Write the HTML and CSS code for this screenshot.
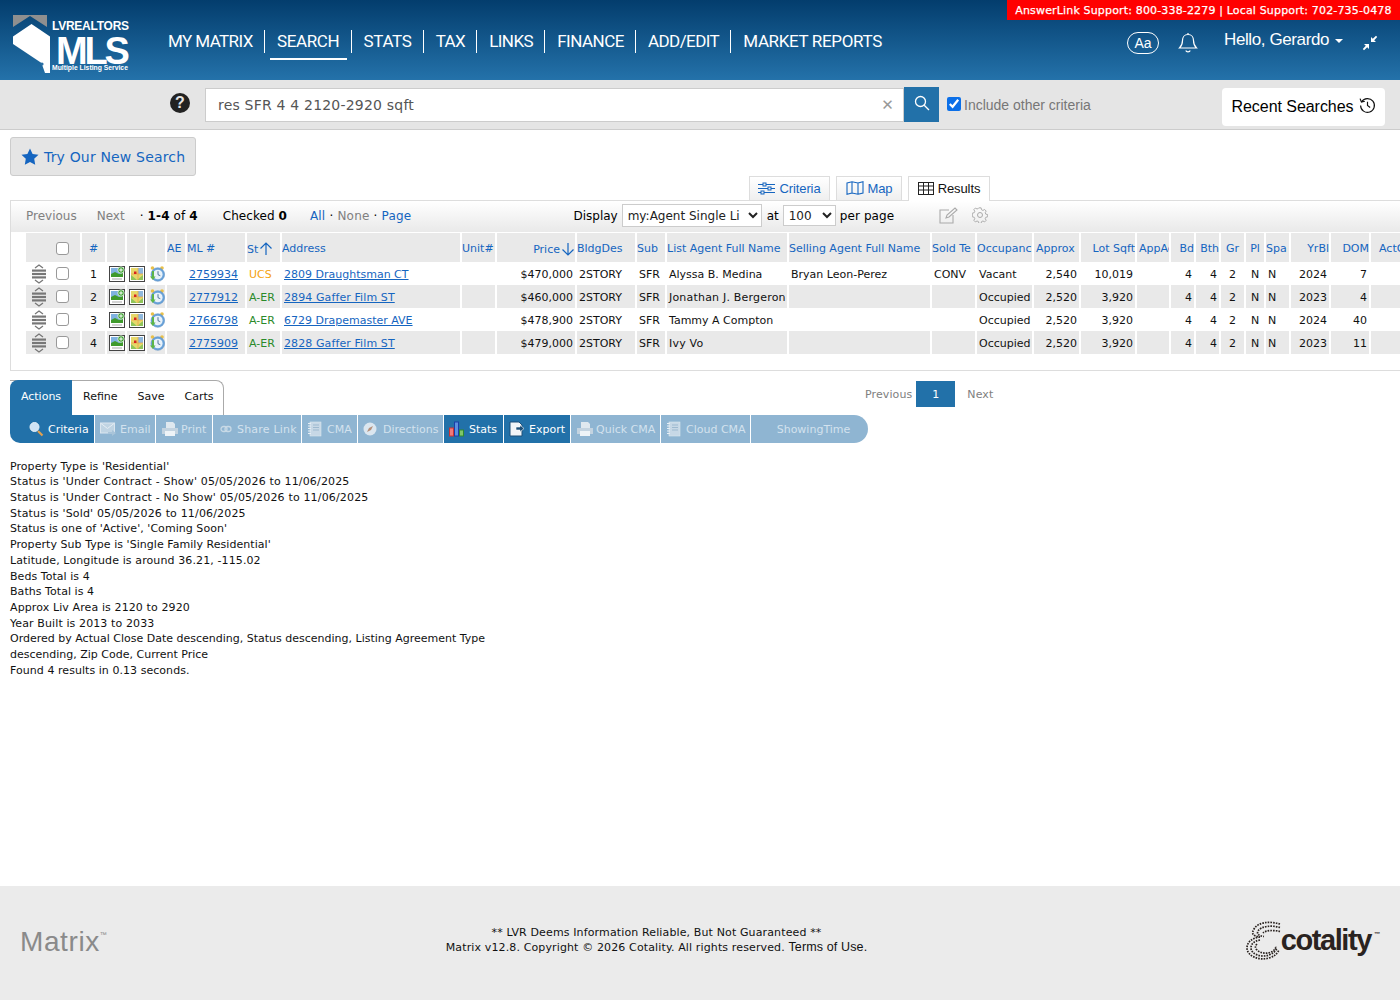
FILE: index.html
```html
<!DOCTYPE html>
<html lang="en">
<head>
<meta charset="utf-8">
<title>Matrix - Search Results</title>
<link rel="stylesheet" href="styles.css">
</head>
<body>
<svg class="defs" width="0" height="0" aria-hidden="true">
  <symbol id="i-photo" viewBox="0 0 16 16">
    <rect x=".5" y=".5" width="15" height="15" fill="#fff" stroke="#444"/>
    <rect x="2" y="2" width="12" height="9" fill="#7fb2e0"/>
    <path d="M2 8l4-2 4 2 4-1v4H2z" fill="#3f9a2c"/>
    <rect x="3" y="12.5" width="10" height="1" fill="#aaa"/>
    <circle cx="12" cy="4" r="3.2" fill="#3aa02e" stroke="#fff" stroke-width=".7"/>
    <path d="M12 2.2v3.6M10.2 4h3.6" stroke="#fff" stroke-width="1"/>
  </symbol>
  <symbol id="i-map" viewBox="0 0 16 16">
    <rect x=".5" y=".5" width="15" height="15" fill="#fff" stroke="#444"/>
    <rect x="2" y="2" width="12" height="12" fill="#e6d86a"/>
    <path d="M9 2h5v6H9z" fill="#8fb8dc"/>
    <path d="M2 9l6 5H2zM8 14l6-5v5z" fill="#8fc45a"/>
    <path d="M9 2v12M2 8h12" stroke="#e9a54c" stroke-width=".8"/>
    <rect x="5" y="5.5" width="2.5" height="2.5" fill="#d8231f"/>
  </symbol>
  <symbol id="i-clock" viewBox="0 0 16 16">
    <circle cx="3.500" cy="2" r="1.800" fill="#e8c04a"/>
    <circle cx="13" cy="2" r="1.800" fill="#e8c04a"/>
    <circle cx="8.800" cy="8.500" r="6.800" fill="#6aa3da" stroke="#4f86bd" stroke-width=".5"/>
    <circle cx="8.800" cy="8.500" r="4.800" fill="#e9f2f9"/>
    <path d="M9 5.200v3.500l2.300 1" fill="none" stroke="#3d6590" stroke-width=".9"/>
    <path d="M3 5v5.500H1L3.800 14l2.800-3.500H5V5z" fill="#5cb548"/>
  </symbol>
  <symbol id="i-grip" viewBox="0 0 16 20">
    <path d="M4 4l4-3 4 3M4 16l4 3 4-3" fill="none" stroke="#777" stroke-width="1.300"/>
    <rect x="1" y="5.500" width="14" height="2.200" fill="#777"/>
    <rect x="1" y="8.900" width="14" height="2.200" fill="#777"/>
    <rect x="1" y="12.300" width="14" height="2.200" fill="#777"/>
  </symbol>
  <symbol id="i-print" viewBox="0 0 18 16">
    <path d="M5 1h7l2 2v4H5z" fill="#dfe8ef"/>
    <path d="M1 7h16v6H1z" fill="#c3d3e0"/>
    <path d="M4 10h10v5H4z" fill="#eef3f7"/>
  </symbol>
  <symbol id="i-note" viewBox="0 0 16 16">
    <rect x="3" y="1" width="11" height="14" fill="#c7d8e6" stroke="#dbe6ef" stroke-width=".6"/>
    <path d="M1 2.500h3M1 5h3M1 7.500h3M1 10h3M1 12.500h3" stroke="#e6eef5"/>
    <path d="M6 4h6M6 6.500h6M6 9h6" stroke="#9db9cf"/>
  </symbol>
</svg>

<header class="topbar">
  <a class="logo" href="#">
    <svg width="120" height="60" viewBox="0 0 120 60">
      <path d="M1 1h34v12l-17-11L1 13z" fill="#8f8f8f"/>
      <path d="M1 22.500L19.500 10 38 22.500V59h-5l-3.500-10L1 30z" fill="#fff"/>
      <circle cx="30" cy="50" r="1.600" fill="#2a6fa5"/>
      <text class="logo-top" x="40" y="16">LVREALTORS</text>
      <text class="logo-mls" x="44" y="49.500">MLS</text>
      <text class="logo-sub" x="40" y="56">Multiple Listing Service</text>
    </svg>
  </a>
  <nav class="nav">
    <a class="nav-item nav-first" href="#">MY MATRIX</a>
    <a class="nav-item is-active" href="#">SEARCH</a>
    <a class="nav-item" href="#">STATS</a>
    <a class="nav-item nav-tight" href="#">TAX</a>
    <a class="nav-item nav-tight" href="#">LINKS</a>
    <a class="nav-item nav-mid" href="#">FINANCE</a>
    <a class="nav-item nav-tight" href="#">ADD/EDIT</a>
    <a class="nav-item last" href="#">MARKET REPORTS</a>
  </nav>
  <div class="top-right">
    <span class="aa">Aa</span>
    <svg class="bell" width="20" height="22" viewBox="0 0 20 22" fill="none" stroke="#fff" stroke-width="1.200"><path d="M10 2.500c-3.500 0-5.500 2.800-5.500 6 0 4-1 5.500-3 7.500h17c-2-2-3-3.500-3-7.500 0-3.200-2-6-5.500-6zM10 1v1.500M7.800 18.500c.5 1.700 3.900 1.700 4.400 0"/></svg>
    <span class="hello">Hello, Gerardo</span>
    <span class="caret"></span>
    <svg class="compress" width="16" height="16" viewBox="0 0 16 16" fill="#fff"><path d="M9 7V2l1.800 1.800L14 .8 15.200 2 12.200 5.200 14 7zM7 9v5l-1.800-1.800L2 15.200.8 14l3-3.200L2 9z"/></svg>
  </div>
  <div class="support">AnswerLink Support: 800-338-2279 | Local Support: 702-735-0478</div>
</header>

<section class="searchbar">
  <span class="help">?</span>
  <div class="search-input">
    <span>res SFR 4 4 2120-2920 sqft</span>
    <span class="clear">✕</span>
  </div>
  <button class="search-btn" type="button" aria-label="Search">
    <svg width="16" height="16" viewBox="0 0 16 16" fill="none" stroke="#fff" stroke-width="1.300"><circle cx="6.500" cy="6.500" r="5"/><path d="M10.200 10.200L15 15"/></svg>
  </button>
  <label class="include"><input class="include-check" type="checkbox" checked>Include other criteria</label>
  <button class="recent" type="button">Recent Searches
    <svg class="recent-icon" width="17" height="17" viewBox="0 0 16 16" fill="none" stroke="#111" stroke-width="1.100"><path d="M2.500 4.500A6.500 6.500 0 1 1 1.500 8M1 1.500l1.300 3.300 3.200-.8M8 4.500V8l2.500 1.800"/></svg>
  </button>
</section>

<main class="main">
  <button class="try" type="button">
    <svg width="18" height="17" viewBox="0 0 18 17" fill="#1565c0"><path d="M9 .5l2.600 5.400 5.900.8-4.300 4.100 1 5.900L9 13.900l-5.200 2.800 1-5.900L.5 6.700l5.900-.8z"/></svg>
    Try Our New Search
  </button>

  <div class="view-tabs">
    <a class="view-tab tab-criteria" href="#">
      <svg width="17" height="13" viewBox="0 0 17 13" fill="none" stroke="#1565c0"><path d="M0 2.500h17M0 6.500h17M0 10.500h17"/><rect x="5" y="1" width="3" height="3" fill="#f0f0f0"/><rect x="10" y="5" width="3" height="3" fill="#f0f0f0"/><rect x="3" y="9" width="3" height="3" fill="#f0f0f0"/></svg>
      Criteria</a>
    <a class="view-tab tab-map" href="#">
      <svg width="18" height="14" viewBox="0 0 18 14" fill="none" stroke="#1565c0" stroke-width="1.100"><path d="M1 2l5-1.200 6 1.200 5-1.200V12l-5 1.200L6 12l-5 1.200zM6 1v11M12 2v11"/></svg>
      Map</a>
    <a class="view-tab tab-results is-current" href="#">
      <svg width="16" height="13" viewBox="0 0 16 13" fill="none" stroke="#222"><rect x=".5" y=".5" width="15" height="12"/><path d="M.5 4h15M.5 8h15M5.500.5v12M10.500.5v12"/></svg>
      Results</a>
  </div>

  <section class="panel">
    <div class="tools">
      <span class="muted">Previous</span>
      <span class="muted t-next">Next</span>
      <span class="t-range">· <b>1-4</b> of <b>4</b></span>
      <span class="t-checked">Checked <b>0</b></span>
      <span class="t-all"><a href="#">All</a> · <span class="muted">None</span> · <a href="#">Page</a></span>
      <span class="t-display">Display</span>
      <select class="sel sel-display"><option>my:Agent Single Li</option></select>
      <span class="t-at">at</span>
      <select class="sel sel-page"><option>100</option></select>
      <span class="t-per">per page</span>
      <svg class="t-edit" width="19" height="17" viewBox="0 0 19 17" fill="none" stroke="#aaa" stroke-width="1.100"><path d="M14 8v8H1V3h9M7 11l1-3 8-7 2 2-8 7z"/></svg>
      <svg class="t-gear" width="16" height="16" viewBox="0 0 16 16" fill="none" stroke="#aaa"><path d="M6.800.8h2.400l.4 2 1.500.7 1.800-1 1.600 1.700-1 1.700.6 1.500 2 .5v2.300l-2 .5-.6 1.500 1 1.700-1.600 1.700-1.800-1-1.500.7-.4 1.900H6.800l-.4-1.900-1.500-.7-1.800 1-1.600-1.700 1-1.700-.6-1.500-2-.5V6.400l2-.5.6-1.500-1-1.700L3.100 1l1.800 1 1.500-.7z" transform="translate(.4 .1) scale(.95)"/><circle cx="8" cy="8" r="2.500"/></svg>
    </div>
    <table class="grid">
      <colgroup>
        <col class="w54"><col class="w23"><col class="w18"><col class="w18"><col class="w18"><col class="w18"><col class="w58"><col class="w33"><col class="w178"><col class="w33"><col class="w78"><col class="w58"><col class="w28"><col class="w120"><col class="w141"><col class="w43"><col class="w55"><col class="w45"><col class="w54"><col class="w32"><col class="w23"><col class="w23"><col class="w23"><col class="w18"><col class="w23"><col class="w38"><col class="w38"><col class="w50">
      </colgroup>
      <thead>
        <tr>
          <th><span class="check-wrap head-check"><input class="box" type="checkbox"></span></th>
          <th class="c">#</th><th></th><th></th><th></th>
          <th>AE</th><th>ML #</th>
          <th>St<svg class="arrow" width="14" height="14" viewBox="0 0 14 14" fill="none" stroke="#1565c0" stroke-width="1.200"><path d="M7 13V1M1.500 6.500L7 1l5.500 5.500"/></svg></th>
          <th>Address</th><th>Unit#</th>
          <th class="r">Price<svg class="arrow" width="14" height="14" viewBox="0 0 14 14" fill="none" stroke="#1565c0" stroke-width="1.200"><path d="M7 1v12M1.500 7.500L7 13l5.500-5.500"/></svg></th>
          <th>BldgDes</th><th>Sub</th>
          <th>List Agent Full Name</th><th>Selling Agent Full Name</th>
          <th>Sold Te</th><th>Occupanc</th><th class="pl">Approx</th>
          <th class="r">Lot Sqft</th><th class="pl">AppAc</th>
          <th class="r">Bd</th><th class="r">Bth</th><th class="c">Gr</th><th class="c">Pl</th><th>Spa</th>
          <th class="r">YrBl</th><th class="r">DOM</th><th class="pl8">ActC</th>
        </tr>
      </thead>
      <tbody>
        <tr>
          <td class="tool"><span class="check-wrap"><svg class="grip"><use href="#i-grip"/></svg><input class="box" type="checkbox"></span></td>
          <td class="c">1</td>
          <td class="ic"><svg class="pic"><use href="#i-photo"/></svg></td><td class="ic"><svg class="pic"><use href="#i-map"/></svg></td><td class="ic"><svg class="pic"><use href="#i-clock"/></svg></td>
          <td></td><td><a href="#">2759934</a></td><td class="ucs">UCS</td><td><a href="#">2809 Draughtsman CT</a></td><td></td>
          <td class="r">$470,000</td><td>2STORY</td><td>SFR</td><td>Alyssa B. Medina</td><td>Bryan Leon-Perez</td><td>CONV</td><td>Vacant</td>
          <td class="r">2,540</td><td class="r">10,019</td><td></td><td class="r">4</td><td class="r">4</td><td class="c">2</td><td class="c">N</td><td>N</td><td class="r">2024</td><td class="r">7</td><td></td>
        </tr>
        <tr class="alt">
          <td class="tool"><span class="check-wrap"><svg class="grip"><use href="#i-grip"/></svg><input class="box" type="checkbox"></span></td>
          <td class="c">2</td>
          <td class="ic"><svg class="pic"><use href="#i-photo"/></svg></td><td class="ic"><svg class="pic"><use href="#i-map"/></svg></td><td class="ic"><svg class="pic"><use href="#i-clock"/></svg></td>
          <td></td><td><a href="#">2777912</a></td><td class="aer">A-ER</td><td><a class="wide" href="#">2894 Gaffer Film ST</a></td><td></td>
          <td class="r">$460,000</td><td>2STORY</td><td>SFR</td><td class="wider">Jonathan J. Bergeron</td><td></td><td></td><td>Occupied</td>
          <td class="r">2,520</td><td class="r">3,920</td><td></td><td class="r">4</td><td class="r">4</td><td class="c">2</td><td class="c">N</td><td>N</td><td class="r">2023</td><td class="r">4</td><td></td>
        </tr>
        <tr>
          <td class="tool"><span class="check-wrap"><svg class="grip"><use href="#i-grip"/></svg><input class="box" type="checkbox"></span></td>
          <td class="c">3</td>
          <td class="ic"><svg class="pic"><use href="#i-photo"/></svg></td><td class="ic"><svg class="pic"><use href="#i-map"/></svg></td><td class="ic"><svg class="pic"><use href="#i-clock"/></svg></td>
          <td></td><td><a href="#">2766798</a></td><td class="aer">A-ER</td><td><a href="#">6729 Drapemaster AVE</a></td><td></td>
          <td class="r">$478,900</td><td>2STORY</td><td>SFR</td><td>Tammy A Compton</td><td></td><td></td><td>Occupied</td>
          <td class="r">2,520</td><td class="r">3,920</td><td></td><td class="r">4</td><td class="r">4</td><td class="c">2</td><td class="c">N</td><td>N</td><td class="r">2024</td><td class="r">40</td><td></td>
        </tr>
        <tr class="alt">
          <td class="tool"><span class="check-wrap"><svg class="grip"><use href="#i-grip"/></svg><input class="box" type="checkbox"></span></td>
          <td class="c">4</td>
          <td class="ic"><svg class="pic"><use href="#i-photo"/></svg></td><td class="ic"><svg class="pic"><use href="#i-map"/></svg></td><td class="ic"><svg class="pic"><use href="#i-clock"/></svg></td>
          <td></td><td><a href="#">2775909</a></td><td class="aer">A-ER</td><td><a class="wide" href="#">2828 Gaffer Film ST</a></td><td></td>
          <td class="r">$479,000</td><td>2STORY</td><td>SFR</td><td class="wider">Ivy Vo</td><td></td><td></td><td>Occupied</td>
          <td class="r">2,520</td><td class="r">3,920</td><td></td><td class="r">4</td><td class="r">4</td><td class="c">2</td><td class="c">N</td><td>N</td><td class="r">2023</td><td class="r">11</td><td></td>
        </tr>
      </tbody>
    </table>
  </section>

  <section class="actions">
    <div class="action-head">
      <div class="action-tabs">
        <a class="a-tab is-on" href="#">Actions</a>
        <a class="a-tab a-refine" href="#">Refine</a>
        <a class="a-tab a-save" href="#">Save</a>
        <a class="a-tab a-carts" href="#">Carts</a>
      </div>
      <div class="pager">
        <span>Previous</span>
        <span class="page-one">1</span>
        <span>Next</span>
      </div>
    </div>
    <div class="action-bar">
      <a class="act on w-criteria" href="#"><svg width="16" height="16" viewBox="0 0 16 16"><circle cx="6.500" cy="6" r="4.500" fill="#cfe3f5" stroke="#e6f0f8"/><path d="M10 10l4.500 4.500" stroke="#e0a050" stroke-width="2.200"/></svg>Criteria</a>
      <a class="act w-email" href="#"><svg width="16" height="14" viewBox="0 0 16 14"><rect x=".5" y="1" width="14" height="10" fill="#c0d4e3" stroke="#dbe6ef"/><path d="M1 1.500l6.500 5 6.500-5" fill="none" stroke="#e6eef5"/><path d="M8 10h4V8l4 3-4 3v-2H8z" fill="#a9c4d9"/></svg>Email</a>
      <a class="act w-print" href="#"><svg width="18" height="16"><use href="#i-print"/></svg>Print</a>
      <a class="act w-share" href="#"><svg width="12" height="8" viewBox="0 0 12 8" fill="none" stroke="#c7d9e6" stroke-width="1.300"><rect x="1" y="1.500" width="6" height="5" rx="2.500"/><rect x="5" y="1.500" width="6" height="5" rx="2.500"/></svg>Share Link</a>
      <a class="act w-cma" href="#"><svg width="16" height="16"><use href="#i-note"/></svg>CMA</a>
      <a class="act w-dir" href="#"><svg width="14" height="14" viewBox="0 0 14 14"><circle cx="7" cy="7" r="6.500" fill="#dbe6ef"/><path d="M10 4L8 8 4 10l2-4z" fill="#b58f7a"/></svg>Directions</a>
      <a class="act on w-stats" href="#"><svg width="16" height="16" viewBox="0 0 16 16"><rect x=".5" y="7" width="4" height="8" fill="#f07a7a" stroke="#c33"/><rect x="5.500" y="1" width="4" height="14" fill="#5b8fe0" stroke="#1a3fa8"/><rect x="10.500" y="9" width="4" height="6" fill="#7fc76a" stroke="#2e8a2e"/></svg>Stats</a>
      <a class="act on w-export" href="#"><svg width="15" height="16" viewBox="0 0 15 16"><path d="M1 1h9l3 3v11H1z" fill="#f2f5f8" stroke="#1d4f78"/><path d="M7 6h4V4l4 3.500L11 11V9H7z" fill="#1d4f78" stroke="#fff" stroke-width=".6"/></svg>Export</a>
      <a class="act w-quick" href="#"><svg width="18" height="16"><use href="#i-print"/></svg>Quick CMA</a>
      <a class="act w-cloud" href="#"><svg width="16" height="16"><use href="#i-note"/></svg>Cloud CMA</a>
      <a class="act w-show" href="#">ShowingTime</a>
    </div>
  </section>

  <section class="criteria">
    <p class="sp1">Property Type is 'Residential'</p>
    <p class="sp2">Status is 'Under Contract - Show' 05/05/2026 to 11/06/2025</p>
    <p class="sp2">Status is 'Under Contract - No Show' 05/05/2026 to 11/06/2025</p>
    <p class="sp2">Status is 'Sold' 05/05/2026 to 11/06/2025</p>
    <p class="sp1">Status is one of 'Active', 'Coming Soon'</p>
    <p class="sp1">Property Sub Type is 'Single Family Residential'</p>
    <p class="sp3">Latitude, Longitude is around 36.21, -115.02</p>
    <p class="sp1">Beds Total is 4</p>
    <p class="sp1">Baths Total is 4</p>
    <p class="sp3">Approx Liv Area is 2120 to 2920</p>
    <p class="sp3">Year Built is 2013 to 2033</p>
    <p>Ordered by Actual Close Date descending, Status descending, Listing Agreement Type descending, Zip Code, Current Price</p>
    <p class="sp1">Found 4 results in 0.13 seconds.</p>
  </section>
</main>

<footer class="footer">
  <div class="matrix">Matrix<sup>™</sup></div>
  <div class="legal">
    <p>** LVR Deems Information Reliable, But Not Guaranteed **</p>
    <p>Matrix v12.8. Copyright © 2026 Cotality. All rights reserved. <a href="#">Terms of Use.</a></p>
  </div>
  <div class="cotality">
    <svg class="cot-mark" width="36" height="40" viewBox="0 0 36 40" fill="none" stroke="#2a2320" stroke-width="1.700" stroke-dasharray="1.600 1.100">
      <path d="M34 3C24 0 12 1 8 8c-3 5-1 7 6 8"/>
      <path d="M34 6.500C26 4 15 5 12 10c-1.500 3 1 5 6 5.500"/>
      <path d="M34 10.500C28 9 20 9 17 12"/>
      <path d="M14 16C6 17 1 21 1 27c0 8 12 13 22 10 5-1.500 8-4 10-8"/>
      <path d="M14 19C8 20 5 23 5 27c0 6 10 10 18 7 4-1.500 7-4 8-7"/>
      <path d="M11 23c-2 2-2 4 0 6 4 4 12 4 16 1 2-1.500 3-3 3-5"/>
    </svg>
    <span class="cot-name">cotality<sup>™</sup></span>
  </div>
</footer>
</body>
</html>
```
FILE: styles.css
```css
* { box-sizing: border-box; }
html, body { margin: 0; padding: 0; }
body {
  width: 1400px;
  min-height: 1000px;
  display: flex;
  flex-direction: column;
  overflow: hidden;
  background: #fff;
  color: #000;
  font-family: "DejaVu Sans", Verdana, sans-serif;
  font-size: 11px;
}
a { color: #1565c0; text-decoration: none; }
p { margin: 0; }
.defs { position: absolute; }

/* top bar */
.topbar {
  position: relative;
  height: 80px;
  display: flex;
  align-items: flex-start;
  background: linear-gradient(#033d6d, #2472aa);
  font-family: "Liberation Sans", Arial, sans-serif;
  color: #fff;
}
.logo { display: block; width: 120px; height: 60px; margin: 14px 0 0 12px; }
.logo-top { font: bold 12px "Liberation Sans", Arial, sans-serif; fill: #fff; letter-spacing: -.25px; }
.logo-mls { font: bold 38px "Liberation Sans", Arial, sans-serif; fill: #fff; letter-spacing: -3.200px; }
.logo-sub { font: bold 6.800px "Liberation Sans", Arial, sans-serif; fill: #fff; }
.nav { display: flex; margin: 30px 0 0 24px; }
.nav-item {
  position: relative;
  height: 23px;
  padding: 0 11.200px 0 12px;
  border-right: 1px solid #fff;
  color: #fff;
  font-family: Roboto, "Liberation Sans", Arial, sans-serif;
  font-size: 17px;
  line-height: 23px;
  letter-spacing: -.35px;
  white-space: nowrap;
}
.nav-first { letter-spacing: -.6px; }
.nav-tight { letter-spacing: -.6px; }
.nav-mid { letter-spacing: -.5px; }
.nav-item.last { border-right: 0; }
.nav-item.is-active::after {
  content: "";
  position: absolute;
  left: 5px;
  right: 4px;
  bottom: -7px;
  height: 2px;
  background: #fff;
}
.top-right { display: flex; align-items: center; margin: 28px 0 0 auto; padding-right: 22px; }
.aa {
  width: 32px;
  height: 22px;
  border: 1.500px solid #fff;
  border-radius: 11px;
  text-align: center;
  font-size: 14px;
  font-weight: 500;
  line-height: 20px;
  margin-top: 4px;
}
.bell { margin: 4px 0 0 19px; }
.hello { margin: -2px 0 0 26px; font-size: 17px; letter-spacing: -.4px; }
.caret {
  width: 0; height: 0;
  margin: 0 0 0 6px;
  border: 4px solid transparent;
  border-top-color: #fff;
  border-bottom: 0;
}
.compress { margin: 4px 0 0 19px; }
.support {
  position: absolute;
  top: 0; right: 0;
  width: 393px;
  height: 20px;
  background: #f00;
  color: #fff;
  font: 400 11px/21px "DejaVu Sans", Verdana, sans-serif;
  letter-spacing: .16px;
  text-align: center;
  -webkit-text-stroke: .25px #fff;
}

/* search bar */
.searchbar {
  height: 50px;
  display: flex;
  align-items: flex-start;
  background: #e5e5e5;
  border-bottom: 1px solid #ccc;
}
.help {
  width: 20px; height: 20px;
  margin: 13px 15px 0 170px;
  border-radius: 50%;
  background: #222;
  color: #e5e5e5;
  font: bold 16px/20px "Liberation Sans", Arial, sans-serif;
  text-align: center;
}
.search-input {
  width: 699px; height: 34px;
  margin-top: 8px;
  padding: 0 9px 0 12px;
  display: flex;
  align-items: center;
  justify-content: space-between;
  background: #fff;
  border: 1px solid #ccc;
  color: #555;
  font-size: 14px;
  letter-spacing: .2px;
}
.clear { color: #999; font-size: 15px; }
.search-btn {
  width: 35px; height: 35px;
  margin-top: 7px;
  padding: 0;
  border: 0;
  background: #2271a9;
}
.include {
  display: flex;
  align-items: center;
  height: 14px;
  margin: 18px 0 0 8px;
  color: #777;
  font: 14px "Liberation Sans", Arial, sans-serif;
}
.include-check { width: 14px; height: 14px; margin: -3px 3px 0 0; accent-color: #0b6fe8; }
.recent {
  width: 163px; height: 38px;
  margin: 8px 15px 0 auto;
  padding: 0;
  display: flex;
  align-items: center;
  justify-content: center;
  gap: 5px;
  background: #fff;
  border: 0;
  border-radius: 4px;
  color: #000;
  font: 16px "Liberation Sans", Arial, sans-serif;
  letter-spacing: -.05px;
}
.recent-icon { margin-top: -4px; }

/* main */
.main { display: flex; flex-direction: column; align-items: flex-start; }
.try {
  width: 186px; height: 39px;
  margin: 7px 0 0 10px;
  padding: 0 0 0 10px;
  display: flex;
  align-items: center;
  gap: 5px;
  background: #e5e5e5;
  border: 1px solid #ccc;
  border-radius: 3px;
  color: #1565c0;
  font: 14px "DejaVu Sans", Verdana, sans-serif;
  letter-spacing: .17px;
}
.view-tabs { display: flex; gap: 6px; height: 24px; margin-left: 749px; }
.view-tab {
  height: 24px;
  padding: 0 0 1px;
  display: flex;
  align-items: center;
  justify-content: center;
  gap: 4px;
  background: linear-gradient(#fff, #efefef);
  border: 1px solid #ddd;
  border-bottom: 0;
  font: 13px "Liberation Sans", Arial, sans-serif;
  letter-spacing: -.1px;
}
.tab-criteria { width: 81px; }
.tab-map { width: 66px; }
.tab-results { width: 82px; }
.view-tab.is-current {
  position: relative;
  z-index: 1;
  height: 25px;
  background: #fff;
  color: #111;
  padding-bottom: 2px;
}
.panel {
  width: 1390px;
  height: 171px;
  margin-left: 10px;
  border: 1px solid #ddd;
  border-right: 0;
  overflow: hidden;
}
.tools {
  height: 31px;
  display: flex;
  align-items: center;
  padding: 0 0 2px 15px;
  background: linear-gradient(#fff, #e9e9e9);
  font-size: 12px;
  white-space: nowrap;
}
.muted { color: #808080; }
.t-next { margin-left: 20px; }
.t-range { margin-left: 15px; letter-spacing: .12px; }
.t-checked { margin-left: 25px; letter-spacing: .05px; }
.t-all { margin-left: 23px; letter-spacing: .2px; }
.t-display { margin-left: 162px; }
.sel {
  height: 23px;
  margin-left: 4px;
  padding: 0 0 0 1px;
  background: #fff;
  border: 1px solid #ccc;
  color: #222;
  font: 12px "DejaVu Sans", Verdana, sans-serif;
}
.sel-display { width: 140px; }
.sel-page { width: 53px; height: 21px; }
.t-at { margin-left: 5px; }
.t-per { margin-left: 4px; letter-spacing: .1px; }
.t-edit { margin-left: 45px; }
.t-gear { margin-left: 14px; margin-top: -1px; }

/* grid */
.grid {
  table-layout: fixed;
  width: 1396px;
  margin: 0 0 0 13px;
  border-collapse: separate;
  border-spacing: 2px 0;
  border-top: 1px solid #fff;
  font-size: 11px;
}
.w18 { width: 18px; } .w23 { width: 23px; } .w28 { width: 28px; } .w32 { width: 32px; }
.w33 { width: 33px; } .w38 { width: 38px; } .w43 { width: 43px; } .w45 { width: 45px; }
.w50 { width: 50px; } .w54 { width: 54px; } .w55 { width: 55px; } .w58 { width: 58px; }
.w78 { width: 78px; } .w120 { width: 120px; } .w141 { width: 141px; } .w178 { width: 178px; }
.grid th {
  height: 29px;
  padding: 2px 0 0;
  background: #e9e9e9;
  color: #1565c0;
  font-weight: 400;
  text-align: left;
  white-space: nowrap;
  overflow: hidden;
}
.grid td {
  height: 23px;
  padding: 2px 2px 0;
  white-space: nowrap;
  overflow: hidden;
  vertical-align: middle;
  color: #111;
}
.grid .alt td { background: #e9e9e9; }
.grid a { text-decoration: underline; }
.grid th.c, .grid td.c { text-align: center; }
.grid th.r { text-align: right; }
.grid td.r { text-align: right; }
.grid th.pl { padding-left: 2px; }
.grid th.pl8 { padding-left: 8px; }
.grid td.tool { padding: 0; }
.grid td.ic { padding: 0 0 0 2px; }
.grid td.ucs { color: #f5a30f; }
.grid td.aer { color: #2a8a2a; }
.grid .wide { letter-spacing: .1px; }
.grid .wider { letter-spacing: .2px; }
.arrow { vertical-align: -3px; margin-left: 1px; }
.pic { display: block; width: 16px; height: 16px; }
.check-wrap { display: flex; align-items: center; }
.head-check { padding-left: 30px; }
.grip { width: 16px; height: 20px; margin: 0 9px 0 5px; flex: none; }
.box {
  appearance: none;
  width: 13px; height: 13px;
  margin: 0;
  background: #fff;
  border: 1px solid #999;
  border-radius: 3px;
}

/* actions */
.actions { width: 1400px; margin-top: 9px; }
.action-head { display: flex; height: 35px; padding-left: 10px; }
.action-tabs {
  width: 214px; height: 35px;
  display: flex;
  background: #fff;
  border: 1px solid #aaa;
  border-left: 0;
  border-bottom: 0;
  border-radius: 0 8px 0 0;
}
.a-tab { height: 35px; line-height: 32px; color: #111; }
.a-tab.is-on {
  width: 62px;
  margin-top: -1px;
  height: 36px;
  line-height: 34px;
  text-align: center;
  background: #2271a9;
  color: #fff;
  border-radius: 8px 0 0 0;
}
.a-refine { margin-left: 11px; }
.a-save { margin-left: 20px; }
.a-carts { margin-left: 20px; }
.pager { display: flex; align-items: flex-start; margin-left: 641px; color: #808080; line-height: 30px; letter-spacing: .1px; }
.page-one {
  width: 39px; height: 26px;
  margin: 1px 12px 0 4px;
  background: #2271a9;
  color: #fff;
  text-align: center;
  line-height: 27px;
}
.action-bar { display: flex; width: 858px; height: 28px; margin-left: 10px; gap: 1px; }
.act {
  display: flex;
  align-items: center;
  gap: 4px;
  padding-left: 5px;
  height: 28px;
  background: #8fb5d2;
  color: #d3e2ee;
  white-space: nowrap;
}
.act.on { background: #2271a9; color: #fff; }
.w-criteria { width: 84px; padding-left: 18px; border-radius: 0 0 0 10px; }
.w-email { width: 60px; }
.w-print { width: 56px; gap: 2px; }
.w-share { width: 88px; padding-left: 7px; gap: 5px; letter-spacing: .2px; }
.w-cma { width: 55px; }
.w-dir { width: 85px; gap: 6px; }
.w-stats { width: 59px; }
.w-export { width: 66px; gap: 5px; }
.w-quick { width: 89px; gap: 2px; }
.w-cloud { width: 89px; }
.w-show { flex: 1; justify-content: center; border-radius: 0 14px 14px 0; padding: 0 0 0 8px; }

/* criteria */
.criteria { width: 490px; margin: 15.600px 0 0 10px; line-height: 15.700px; color: #111; }
.sp1 { letter-spacing: .05px; }
.sp2 { letter-spacing: .165px; }
.sp3 { letter-spacing: .11px; }

/* footer */
.footer {
  height: 114px;
  margin-top: auto;
  display: flex;
  align-items: center;
  background: #ebebeb;
}
.matrix {
  width: 100px;
  margin: 0 0 3px 20px;
  color: #8a8a8a;
  font: 28px "Liberation Sans", Arial, sans-serif;
  letter-spacing: .6px;
}
.matrix sup { font-size: 7px; vertical-align: 14px; }
.legal { width: 423px; margin: 0 0 6px 325px; text-align: center; line-height: 15.500px; color: #111; letter-spacing: .13px; }
.legal a { color: #111; font: 12.500px "Liberation Sans", Arial, sans-serif; }
.cotality { display: flex; align-items: center; margin: 0 20px 0 auto; }
.cot-mark { margin: -4px 0 0 -1px; }
.cot-name { font: bold 29px "Liberation Sans", Arial, sans-serif; color: #2a2320; letter-spacing: -1.400px; margin: 0 0 5px -1px; }
.cot-name sup { font-size: 6px; vertical-align: 14px; letter-spacing: 0; margin-left: 3px; }
```
